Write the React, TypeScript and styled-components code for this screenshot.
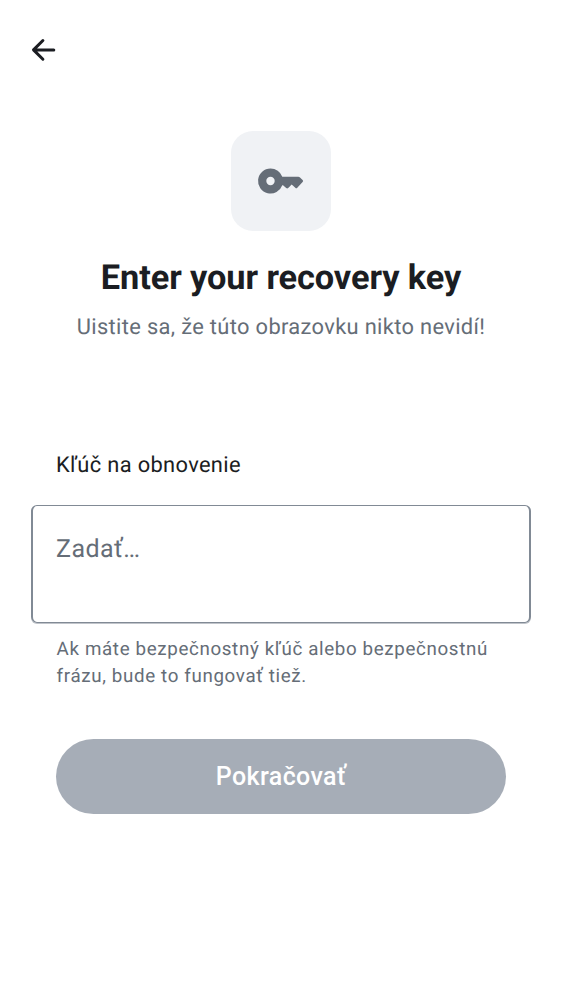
import React from "react";
import styled, { createGlobalStyle } from "styled-components";

const GlobalStyle = createGlobalStyle`
  * { box-sizing: border-box; }
  body { margin: 0; background: #fff; font-family: Roboto, sans-serif; text-rendering: geometricPrecision; }
`;
const Screen = styled.main`
  width: 562px;
  height: 1000px;
  background: #fff;
  display: flex;
  flex-direction: column;
`;
const TopBar = styled.header`
  height: 100px;
  padding-left: 25px;
  display: flex;
  align-items: center;
`;
const BackButton = styled.button`
  border: 0;
  padding: 0;
  background: none;
  display: flex;
  color: #1b1d22;
`;
const Hero = styled.section`
  height: 352px;
  padding-top: 31px;
  display: flex;
  flex-direction: column;
  align-items: center;
`;
const IconTile = styled.div`
  width: 100px;
  height: 100px;
  border-radius: 22px;
  background: #f0f2f5;
  color: #656d77;
  display: grid;
  place-items: center;
`;
const Title = styled.h1`
  margin: 26px 0 0;
  font-size: 34.375px;
  line-height: 43px;
  font-weight: 700;
  letter-spacing: -0.1px;
  color: #1b1d22;
  white-space: nowrap;
`;
const Subtitle = styled.p`
  margin: 12px 0 0;
  font-size: 21.875px;
  line-height: 31px;
  letter-spacing: 0.34px;
  color: #656d77;
  white-space: nowrap;
`;
const Form = styled.form`
  padding: 0 31px;
  display: flex;
  flex-direction: column;
`;
const Label = styled.label`
  padding-left: 25px;
  font-size: 21.875px;
  line-height: 27px;
  letter-spacing: 0.34px;
  color: #1b1d22;
`;
const Field = styled.div`
  margin-top: 26px;
  height: 118px;
  padding: 25px 23px;
  border: solid #818a95;
  border-width: 1px 2px;
  border-radius: 6px;
  box-shadow: 0 1px 0 rgba(129, 138, 149, 0.5);
  font-size: 25px;
  line-height: 37px;
  letter-spacing: 0.45px;
  color: #656d77;
`;
const Hint = styled.p`
  margin: 13px 0 0 25.6px;
  font-size: 18.75px;
  line-height: 27px;
  letter-spacing: 0.645px;
  color: #656d77;
`;
const Submit = styled.button`
  margin: 49px 25px 0;
  height: 75px;
  border: 0;
  border-radius: 38px;
  background: #a6adb7;
  color: #fff;
  font: 500 25px/37px Roboto, sans-serif;
  letter-spacing: 0.4px;
`;

export default function App() {
  return (
    <>
      <GlobalStyle />
      <Screen>
        <TopBar>
          <BackButton aria-label="Back">
            <svg width="38" height="38" viewBox="0 0 38 38" fill="none" stroke="currentColor" strokeWidth="3" strokeLinecap="round" strokeLinejoin="round">
              <path d="M17.9 9.5 8.5 18.9 17.9 28.2M9 18.9H28.8" />
            </svg>
          </BackButton>
        </TopBar>
        <Hero>
          <IconTile>
            <svg width="50" height="50" viewBox="0 0 50 50" fill="currentColor">
              <path fillRule="evenodd" d="M14.5 12.5A12.5 12.5 0 0 1 26.3 20.8H42.3Q43.3 20.8 44 21.5L46.6 24.1Q47.6 25.1 46.6 26.1L41.3 31.8Q40.3 32.8 39.3 31.8L35.7 28.6 32.2 32Q31.2 32.9 30.2 32L27 29.2H26.3A12.5 12.5 0 1 1 14.5 12.5M14.5 20.8A4.2 4.2 0 1 0 14.5 29.2A4.2 4.2 0 1 0 14.5 20.8" />
            </svg>
          </IconTile>
          <Title>Enter your recovery key</Title>
          <Subtitle>Uistite sa, že túto obrazovku nikto nevidí!</Subtitle>
        </Hero>
        <Form>
          <Label>Kľúč na obnovenie</Label>
          <Field>Zadať…</Field>
          <Hint>Ak máte bezpečnostný kľúč alebo bezpečnostnú frázu, bude to fungovať tiež.</Hint>
          <Submit type="button">Pokračovať</Submit>
        </Form>
      </Screen>
    </>
  );
}
